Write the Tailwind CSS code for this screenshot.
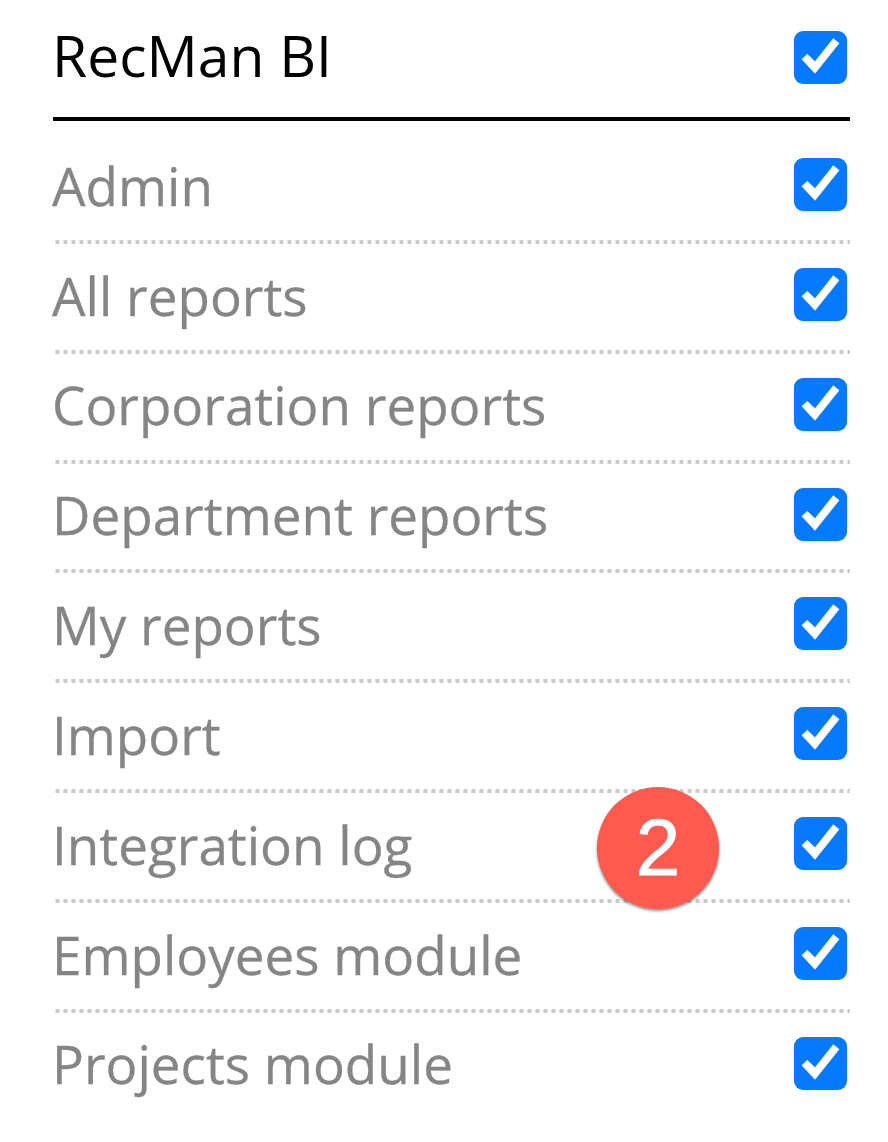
<!DOCTYPE html>
<html lang="en">
<head>
  <meta charset="UTF-8" />
  <title>RecMan BI</title>
  <script src="https://cdn.jsdelivr.net/npm/@tailwindcss/browser@4"></script>
</head>
<body class="bg-white font-['Open_Sans',sans-serif] overflow-hidden">
  <div class="relative w-[888px] h-[1142px] pl-[53px] pr-[38px]">
    <div class="flex items-center justify-between h-[121px] border-b-[4px] border-black pr-[3px] pb-[2px] text-[57px] text-black">
      <span class="-translate-y-[2px] -translate-x-[1px]">RecMan BI</span>
      <svg class="w-[53px] h-[53px]" viewBox="0 0 53 53"><rect width="53" height="53" rx="9" fill="#057aff"/><path d="M8 28.3L13.3 23.3 21 30.7 39.3 7.7 45 12.3 21 42.3Z" fill="#fff" stroke="#fff" stroke-width="0.7"/></svg>
    </div>
    <ul class="text-[53px] text-[#858585] [-webkit-text-stroke:0.3px_#858585] [&_span]:translate-y-[1px] [&_span]:-translate-x-[1px]">
      <li class="flex items-center justify-between h-[123px] pt-[4px] pr-[3px] bg-[linear-gradient(90deg,#ccc_50%,transparent_50%)] bg-[length:8px_4px] bg-repeat-x bg-bottom">
        <span>Admin</span>
        <svg class="w-[53px] h-[53px]" viewBox="0 0 53 53"><rect width="53" height="53" rx="9" fill="#057aff"/><path d="M8 28.3L13.3 23.3 21 30.7 39.3 7.7 45 12.3 21 42.3Z" fill="#fff" stroke="#fff" stroke-width="0.7"/></svg>
      </li>
      <li class="flex items-center justify-between h-[109.83px] pb-[9px] pr-[3px] bg-[linear-gradient(90deg,#ccc_50%,transparent_50%)] bg-[length:8px_4px] bg-repeat-x bg-bottom">
        <span>All reports</span>
        <svg class="w-[53px] h-[53px]" viewBox="0 0 53 53"><rect width="53" height="53" rx="9" fill="#057aff"/><path d="M8 28.3L13.3 23.3 21 30.7 39.3 7.7 45 12.3 21 42.3Z" fill="#fff" stroke="#fff" stroke-width="0.7"/></svg>
      </li>
      <li class="flex items-center justify-between h-[109.83px] pb-[9px] pr-[3px] bg-[linear-gradient(90deg,#ccc_50%,transparent_50%)] bg-[length:8px_4px] bg-repeat-x bg-bottom">
        <span>Corporation reports</span>
        <svg class="w-[53px] h-[53px]" viewBox="0 0 53 53"><rect width="53" height="53" rx="9" fill="#057aff"/><path d="M8 28.3L13.3 23.3 21 30.7 39.3 7.7 45 12.3 21 42.3Z" fill="#fff" stroke="#fff" stroke-width="0.7"/></svg>
      </li>
      <li class="flex items-center justify-between h-[109.83px] pb-[9px] pr-[3px] bg-[linear-gradient(90deg,#ccc_50%,transparent_50%)] bg-[length:8px_4px] bg-repeat-x bg-bottom">
        <span>Department reports</span>
        <svg class="w-[53px] h-[53px]" viewBox="0 0 53 53"><rect width="53" height="53" rx="9" fill="#057aff"/><path d="M8 28.3L13.3 23.3 21 30.7 39.3 7.7 45 12.3 21 42.3Z" fill="#fff" stroke="#fff" stroke-width="0.7"/></svg>
      </li>
      <li class="flex items-center justify-between h-[109.83px] pb-[9px] pr-[3px] bg-[linear-gradient(90deg,#ccc_50%,transparent_50%)] bg-[length:8px_4px] bg-repeat-x bg-bottom">
        <span>My reports</span>
        <svg class="w-[53px] h-[53px]" viewBox="0 0 53 53"><rect width="53" height="53" rx="9" fill="#057aff"/><path d="M8 28.3L13.3 23.3 21 30.7 39.3 7.7 45 12.3 21 42.3Z" fill="#fff" stroke="#fff" stroke-width="0.7"/></svg>
      </li>
      <li class="flex items-center justify-between h-[109.83px] pb-[9px] pr-[3px] bg-[linear-gradient(90deg,#ccc_50%,transparent_50%)] bg-[length:8px_4px] bg-repeat-x bg-bottom">
        <span>Import</span>
        <svg class="w-[53px] h-[53px]" viewBox="0 0 53 53"><rect width="53" height="53" rx="9" fill="#057aff"/><path d="M8 28.3L13.3 23.3 21 30.7 39.3 7.7 45 12.3 21 42.3Z" fill="#fff" stroke="#fff" stroke-width="0.7"/></svg>
      </li>
      <li class="flex items-center justify-between h-[109.83px] pb-[9px] pr-[3px] bg-[linear-gradient(90deg,#ccc_50%,transparent_50%)] bg-[length:8px_4px] bg-repeat-x bg-bottom">
        <span>Integration log</span>
        <svg class="w-[53px] h-[53px]" viewBox="0 0 53 53"><rect width="53" height="53" rx="9" fill="#057aff"/><path d="M8 28.3L13.3 23.3 21 30.7 39.3 7.7 45 12.3 21 42.3Z" fill="#fff" stroke="#fff" stroke-width="0.7"/></svg>
      </li>
      <li class="flex items-center justify-between h-[109.83px] pb-[9px] pr-[3px] bg-[linear-gradient(90deg,#ccc_50%,transparent_50%)] bg-[length:8px_4px] bg-repeat-x bg-bottom">
        <span>Employees module</span>
        <svg class="w-[53px] h-[53px]" viewBox="0 0 53 53"><rect width="53" height="53" rx="9" fill="#057aff"/><path d="M8 28.3L13.3 23.3 21 30.7 39.3 7.7 45 12.3 21 42.3Z" fill="#fff" stroke="#fff" stroke-width="0.7"/></svg>
      </li>
      <li class="flex items-center justify-between h-[109.83px] pb-[9px] pr-[3px]">
        <span>Projects module</span>
        <svg class="w-[53px] h-[53px]" viewBox="0 0 53 53"><rect width="53" height="53" rx="9" fill="#057aff"/><path d="M8 28.3L13.3 23.3 21 30.7 39.3 7.7 45 12.3 21 42.3Z" fill="#fff" stroke="#fff" stroke-width="0.7"/></svg>
      </li>
    </ul>
    <div class="absolute left-[597px] top-[787px] w-[122px] h-[122px] rounded-full bg-[#ff5a4f] shadow-[0_2px_3px_rgba(0,0,0,0.45)] flex items-center justify-center font-['Liberation_Sans',sans-serif] text-[80px] text-white [-webkit-text-stroke:0.8px_#fff]">2</div>
  </div>
</body>
</html>
